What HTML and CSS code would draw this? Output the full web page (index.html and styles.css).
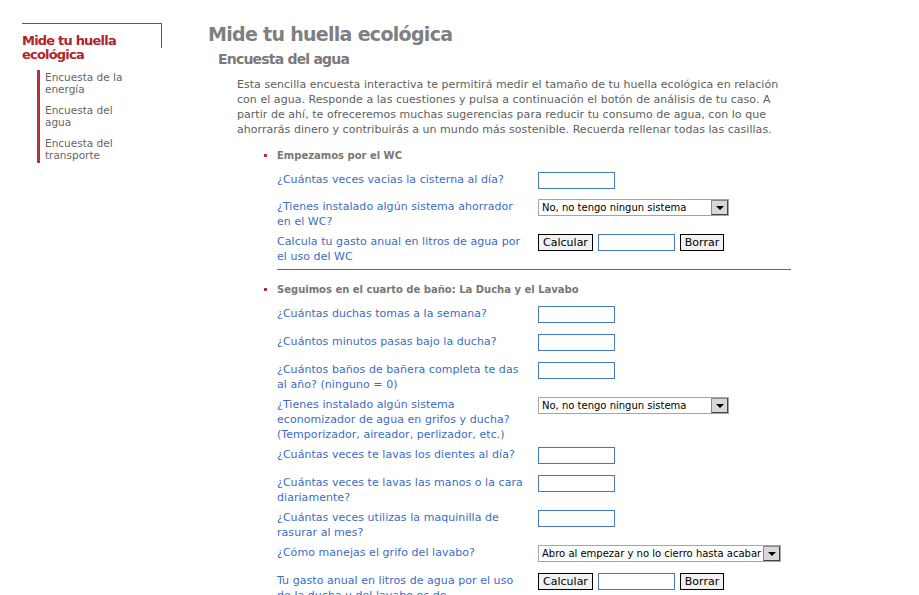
FILE: index.html
```html
<!DOCTYPE html>
<html lang="es">
<head>
    <meta charset="UTF-8" />
    <title>Encuesta del agua</title>
    <link rel="stylesheet" href="styles.css">
</head>
<body>
    <div class="page">
        <div class="sidebar">
            <div class="side-box">
                <h3>Mide tu huella ecológica</h3>
            </div>
            <ul class="side-menu">
                <li><a href="#">Encuesta de la energía</a></li>
                <li><a href="#">Encuesta del agua</a></li>
                <li><a href="#">Encuesta del transporte</a></li>
            </ul>
        </div>

        <div class="content">
            <h1>Mide tu huella ecológica</h1>
            <h2>Encuesta del agua</h2>
            <p class="intro">Esta sencilla encuesta interactiva te permitirá medir el tamaño de tu huella ecológica en relación con el agua. Responde a las cuestiones y pulsa a continuación el botón de análisis de tu caso. A partir de ahí, te ofreceremos muchas sugerencias para reducir tu consumo de agua, con lo que ahorrarás dinero y contribuirás a un mundo más sostenible. Recuerda rellenar todas las casillas.</p>

            <ul class="sections">
                <li class="section">
                    <div class="section-title">Empezamos por el WC</div>
                    <div class="row">
                        <label>¿Cuántas veces vacias la cisterna al día?</label>
                        <div class="field"><input type="text" class="num"></div>
                    </div>
                    <div class="row">
                        <label>¿Tienes instalado algún sistema ahorrador en el WC?</label>
                        <div class="field">
                            <span class="combo">
                                <select><option>No, no tengo ningun sistema</option></select>
                                <span class="arrow"></span>
                            </span>
                        </div>
                    </div>
                    <div class="row">
                        <label>Calcula tu gasto anual en litros de agua por el uso del WC</label>
                        <div class="field">
                            <button type="button" class="calc">Calcular</button>
                            <input type="text" class="num">
                            <button type="button" class="clear">Borrar</button>
                        </div>
                    </div>
                </li>
                <li class="section">
                    <div class="section-title">Seguimos en el cuarto de baño: La Ducha y el Lavabo</div>
                    <div class="row">
                        <label>¿Cuántas duchas tomas a la semana?</label>
                        <div class="field"><input type="text" class="num"></div>
                    </div>
                    <div class="row">
                        <label>¿Cuántos minutos pasas bajo la ducha?</label>
                        <div class="field"><input type="text" class="num"></div>
                    </div>
                    <div class="row">
                        <label>¿Cuántos baños de bañera completa te das al año? (ninguno = 0)</label>
                        <div class="field"><input type="text" class="num"></div>
                    </div>
                    <div class="row">
                        <label>¿Tienes instalado algún sistema economizador de agua en grifos y ducha? (Temporizador, aireador, perlizador, etc.)</label>
                        <div class="field">
                            <span class="combo">
                                <select><option>No, no tengo ningun sistema</option></select>
                                <span class="arrow"></span>
                            </span>
                        </div>
                    </div>
                    <div class="row">
                        <label>¿Cuántas veces te lavas los dientes al día?</label>
                        <div class="field"><input type="text" class="num"></div>
                    </div>
                    <div class="row">
                        <label>¿Cuántas veces te lavas las manos o la cara diariamente?</label>
                        <div class="field"><input type="text" class="num"></div>
                    </div>
                    <div class="row">
                        <label>¿Cuántas veces utilizas la maquinilla de rasurar al mes?</label>
                        <div class="field"><input type="text" class="num"></div>
                    </div>
                    <div class="row">
                        <label>¿Cómo manejas el grifo del lavabo?</label>
                        <div class="field">
                            <span class="combo wide">
                                <select><option>Abro al empezar y no lo cierro hasta acabar</option></select>
                                <span class="arrow"></span>
                            </span>
                        </div>
                    </div>
                    <div class="row">
                        <label>Tu gasto anual en litros de agua por el uso de la ducha y del lavabo es de...</label>
                        <div class="field">
                            <button type="button" class="calc">Calcular</button>
                            <input type="text" class="num">
                            <button type="button" class="clear">Borrar</button>
                        </div>
                    </div>
                </li>
            </ul>
        </div>
    </div>
</body>
</html>
```

FILE: styles.css
```css
body {
    margin: 0;
    font-family: "DejaVu Sans", Verdana, sans-serif;
    font-size: 11px;
    color: #5e5e5e;
    background-color: #fff;
}

.page {
    display: flex;
    align-items: flex-start;
}

/* --- menu lateral --- */
.sidebar {
    width: 140px;
    margin-left: 22px;
    margin-top: 23px;
}

.side-box {
    border-top: 1px solid #b0353b;
    border-right: 1px solid #b0353b;
    height: 24px;
}

.side-box h3 {
    margin: 0;
    padding-top: 10px;
    font-size: 13px;
    line-height: 14px;
    letter-spacing: -0.8px;
    color: #b2242c;
    width: 120px;
}

.side-menu {
    list-style: none;
    margin: 22px 0 0 15px;
    padding: 0 0 0 5px;
    border-left: 3px solid #b0353b;
}

.side-menu li {
    padding: 1px 0 8px 0;
}

.side-menu li:last-child {
    padding-bottom: 2px;
}

.side-menu a {
    display: block;
    width: 92px;
    color: #666;
    text-decoration: none;
    line-height: 12px;
    font-size: 10.5px;
}

/* --- contenido --- */
.content {
    margin-left: 46px;
    padding-top: 22px;
    width: 620px;
}

h1 {
    margin: 0;
    font-size: 19px;
    line-height: 24px;
    letter-spacing: -0.7px;
    color: #7f7f7f;
}

h2 {
    margin: 0 0 0 10px;
    padding-top: 4px;
    font-size: 14px;
    line-height: 18px;
    letter-spacing: -0.8px;
    color: #7a7a7a;
}

.intro {
    margin: 9px 0 0 29px;
    line-height: 15px;
    width: 552px;
    letter-spacing: 0.04px;
}

.sections {
    margin: 11px 0 0 69px;
    padding: 0;
    list-style: none;
}

.section {
    position: relative;
    width: 514px;
}

.section + .section {
    border-top: 1px solid #3d6fc0;
    padding-top: 12px;
}

.section + .section .field {
    min-height: 23px;
}

.section-title {
    font-weight: bold;
    font-size: 10px;
    line-height: 15px;
    color: #777;
    margin-bottom: 9px;
}

.section-title::before {
    content: "";
    position: absolute;
    left: -13px;
    margin-top: 6px;
    width: 3px;
    height: 3px;
    background-color: #b0353b;
}

.row {
    display: flex;
    align-items: flex-start;
    margin-bottom: 5px;
}

.row label {
    width: 252px;
    margin-right: 9px;
    line-height: 15px;
    color: #3b6cc4;
    letter-spacing: 0.05px;
}

.field {
    min-height: 22px;
    display: flex;
    align-items: flex-start;
    gap: 5px;
}

input.num {
    width: 77px;
    height: 17px;
    box-sizing: border-box;
    border: 1px solid #4677c6;
    margin: 0;
    padding: 0 2px;
    font-family: inherit;
    font-size: 11px;
}

button {
    height: 17px;
    box-sizing: border-box;
    border: 1px solid #000;
    background-color: #f1f1f1;
    font-family: inherit;
    font-size: 11px;
    padding: 0;
    margin: 0;
    color: #000;
    line-height: 14px;
}

button.calc {
    width: 55px;
}

button.clear {
    width: 44px;
}

.combo {
    position: relative;
    display: inline-block;
    width: 191px;
    height: 17px;
}

.combo.wide {
    width: 243px;
}

.combo select {
    appearance: none;
    -webkit-appearance: none;
    width: 100%;
    height: 17px;
    box-sizing: border-box;
    border: 1px solid #a5a5a5;
    background-color: #fff;
    font-family: inherit;
    font-size: 10px;
    padding: 0 0 0 3px;
    margin: 0;
    color: #000;
    border-radius: 0;
}

.arrow {
    position: absolute;
    right: 1px;
    top: 1px;
    width: 15px;
    height: 13px;
    background-color: #d8d8d8;
    border: 1px solid #444;
    border-top-color: #888;
    border-left-color: #888;
}

.arrow::after {
    content: "";
    position: absolute;
    left: 4px;
    top: 5px;
    border-left: 4px solid transparent;
    border-right: 4px solid transparent;
    border-top: 4px solid #000;
}
```
